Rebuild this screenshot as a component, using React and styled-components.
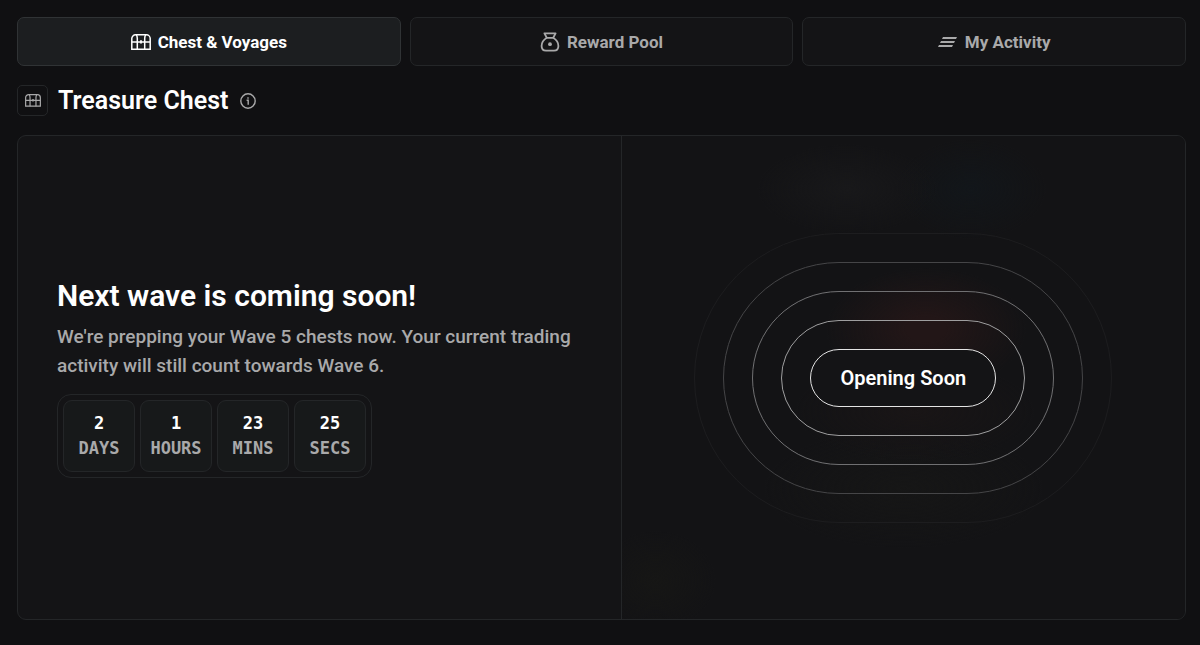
import React, { useState } from "react";
import styled, { createGlobalStyle } from "styled-components";

const border = "#242628";
const muted = "#a9a9aa";
const panel = "#141416";

const tabs = [
    { id: "chest", name: "Chest & Voyages" },
    { id: "pool", name: "Reward Pool" },
    { id: "activity", name: "My Activity" },
];

const countdown = [
    { value: 2, unit: "DAYS" },
    { value: 1, unit: "HOURS" },
    { value: 23, unit: "MINS" },
    { value: 25, unit: "SECS" },
];

const ringColors = ["#1d1d1f", "#454547", "#707072", "#9e9e9f"];

const ChestIcon = ({ width }) => (
    <svg width={width} viewBox="0 0 20 16" fill="none" stroke="currentColor" strokeWidth="1.5" aria-hidden="true">
        <path d="M.8 15.2V4.6A3.8 3.8 0 0 1 4.6.8h10.8a3.8 3.8 0 0 1 3.8 3.8v10.6z" />
        <path d="M.8 8h18.4M5.2.8c.8.9 1.1 2 1.1 3.8v10.6M14.8.8c-.8.9-1.1 2-1.1 3.8v10.6" />
        <path d="M10 6.3v3.2" strokeWidth="1.8" />
    </svg>
);

const BagIcon = () => (
    <svg width="20" height="20" viewBox="0 0 20 20" fill="none" stroke="currentColor" strokeWidth="1.8" strokeLinejoin="round" aria-hidden="true">
        <path d="M4.4 1.4h11.2l-2.4 4.4H6.8z" />
        <path d="M6.8 5.8C3.6 7.8 1.6 10.8 1.6 14c0 3 1.8 4.6 4.4 4.6h8c2.6 0 4.4-1.6 4.4-4.6 0-3.2-2-6.2-5.2-8.2" />
        <circle cx="10" cy="12.2" r="1.9" fill="currentColor" stroke="none" />
    </svg>
);

const LinesIcon = () => (
    <svg width="20" height="12" viewBox="0 0 20 12" fill="currentColor" aria-hidden="true">
        <path d="M5 1h14l-1 2H4zM3 5h14l-1 2H2zM1 9h14l-1 2H0z" />
    </svg>
);

const tabIcons = { chest: <ChestIcon width={20} />, pool: <BagIcon />, activity: <LinesIcon /> };

const App = () => {
    const [activeTab, setActiveTab] = useState("chest");

    return (
        <Page>
            <GlobalStyle />
            <Tabs>
                {tabs.map((tab) => (
                    <Tab key={tab.id} $active={tab.id === activeTab} onClick={() => setActiveTab(tab.id)}>
                        {tabIcons[tab.id]}
                        {tab.name}
                    </Tab>
                ))}
            </Tabs>
            <SectionHeader>
                <IconBox>
                    <ChestIcon width={16} />
                </IconBox>
                <SectionTitle>Treasure Chest</SectionTitle>
                <InfoButton aria-label="About treasure chests">
                    <svg width="16" height="16" viewBox="0 0 16 16" fill="none" stroke="currentColor" strokeWidth="1.4">
                        <circle cx="8" cy="8" r="7.2" />
                        <path d="M6.6 7.2H8.2V11.8M8 4.2v1.6" />
                    </svg>
                </InfoButton>
            </SectionHeader>
            <Card>
                <Info>
                    <Title>Next wave is coming soon!</Title>
                    <Description>
                        We're prepping your Wave 5 chests now. Your current trading activity will still count towards Wave 6.
                    </Description>
                    <Countdown>
                        {countdown.map(({ value, unit }) => (
                            <CountdownCell key={unit}>
                                <strong>{value}</strong>
                                <span>{unit}</span>
                            </CountdownCell>
                        ))}
                    </Countdown>
                </Info>
                <Preview>
                    <Rings />
                </Preview>
            </Card>
        </Page>
    );
};

const Rings = () =>
    ringColors.reduceRight(
        (inner, color) => <Ring $color={color}>{inner}</Ring>,
        <OpeningPill>Opening Soon</OpeningPill>
    );

const GlobalStyle = createGlobalStyle`
    * {
        box-sizing: border-box;
    }
    body {
        margin: 0;
        background: #101012;
        color: #fff;
        font-family: Roboto, "Liberation Sans", sans-serif;
    }
    button {
        font: inherit;
        cursor: pointer;
    }
    svg {
        flex: none;
    }
`;

const Page = styled.main`
    padding: 17px 14px 24px 17px;
`;

const Tabs = styled.nav`
    display: grid;
    grid-template-columns: repeat(3, 1fr);
    gap: 9px;
`;

const Tab = styled.button`
    display: flex;
    align-items: center;
    justify-content: center;
    gap: 7px;
    height: 49px;
    padding: 0 16px;
    border: 1px solid ${({ $active }) => ($active ? "#303335" : border)};
    border-radius: 7px;
    background: ${({ $active }) => ($active ? "#1c1e20" : panel)};
    color: ${({ $active }) => ($active ? "#fff" : muted)};
    font-size: 17px;
    font-weight: 700;
`;

const SectionHeader = styled.header`
    display: flex;
    align-items: center;
    gap: 10px;
    margin: 19px 0;
`;

const IconBox = styled.div`
    display: flex;
    align-items: center;
    justify-content: center;
    width: 31px;
    height: 31px;
    border: 1px solid ${border};
    border-radius: 5px;
    color: ${muted};
`;

const SectionTitle = styled.h1`
    margin: 0;
    font-size: 25px;
    font-weight: 600;
    line-height: 31px;
`;

const InfoButton = styled.button`
    display: flex;
    padding: 2px;
    border: 0;
    background: none;
    color: ${muted};
`;

const Card = styled.section`
    display: grid;
    grid-template-columns: 15fr 14fr;
    border: 1px solid ${border};
    border-radius: 9px;
    background: ${panel};
    overflow: hidden;
`;

const Info = styled.div`
    display: flex;
    flex-direction: column;
    align-items: flex-start;
    justify-content: center;
    padding: 0 32px 0 39px;
    border-right: 1px solid ${border};
`;

const Title = styled.h2`
    margin: 0 0 7px;
    font-size: 30px;
    font-weight: 600;
    line-height: 38px;
`;

const Description = styled.p`
    margin: 0 0 14px;
    color: ${muted};
    font-size: 19px;
    font-weight: 500;
    line-height: 29px;
`;

const Countdown = styled.div`
    display: flex;
    gap: 5px;
    padding: 5px;
    border: 1px solid ${border};
    border-radius: 14px;
`;

const CountdownCell = styled.div`
    display: flex;
    flex-direction: column;
    align-items: center;
    justify-content: center;
    width: 72px;
    height: 72px;
    border: 1px solid ${border};
    border-radius: 9px;
    background: #17191a;
    font-family: "DejaVu Sans Mono", monospace;
    font-size: 17px;
    font-weight: 700;
    line-height: 25px;
    span {
        color: ${muted};
    }
`;

const Preview = styled.div`
    display: flex;
    align-items: center;
    justify-content: center;
    padding: 97px 24px 96px;
    background:
        radial-gradient(ellipse 90px 45px at 40% 11%, #18181a, transparent),
        radial-gradient(ellipse 75px 50px at 62% 11%, #12161a, transparent),
        radial-gradient(ellipse 100px 62px at 54% 40%, #221617 20%, transparent),
        radial-gradient(ellipse 120px 50px at 52% 57%, #191516, transparent),
        radial-gradient(ellipse 140px 60px at 50% 73%, #161616, transparent),
        radial-gradient(ellipse 60px 50px at 6% 92%, #161615, transparent),
        #131315;
`;

const Ring = styled.div`
    padding: 28px;
    border: 1px solid ${({ $color }) => $color};
    border-radius: 999px;
`;

const OpeningPill = styled.div`
    padding: 14px 29px;
    border: 1px solid #e4e4e4;
    border-radius: 999px;
    background: ${panel};
    font-size: 20px;
    font-weight: 600;
    line-height: 28px;
    white-space: nowrap;
`;

export default App;
